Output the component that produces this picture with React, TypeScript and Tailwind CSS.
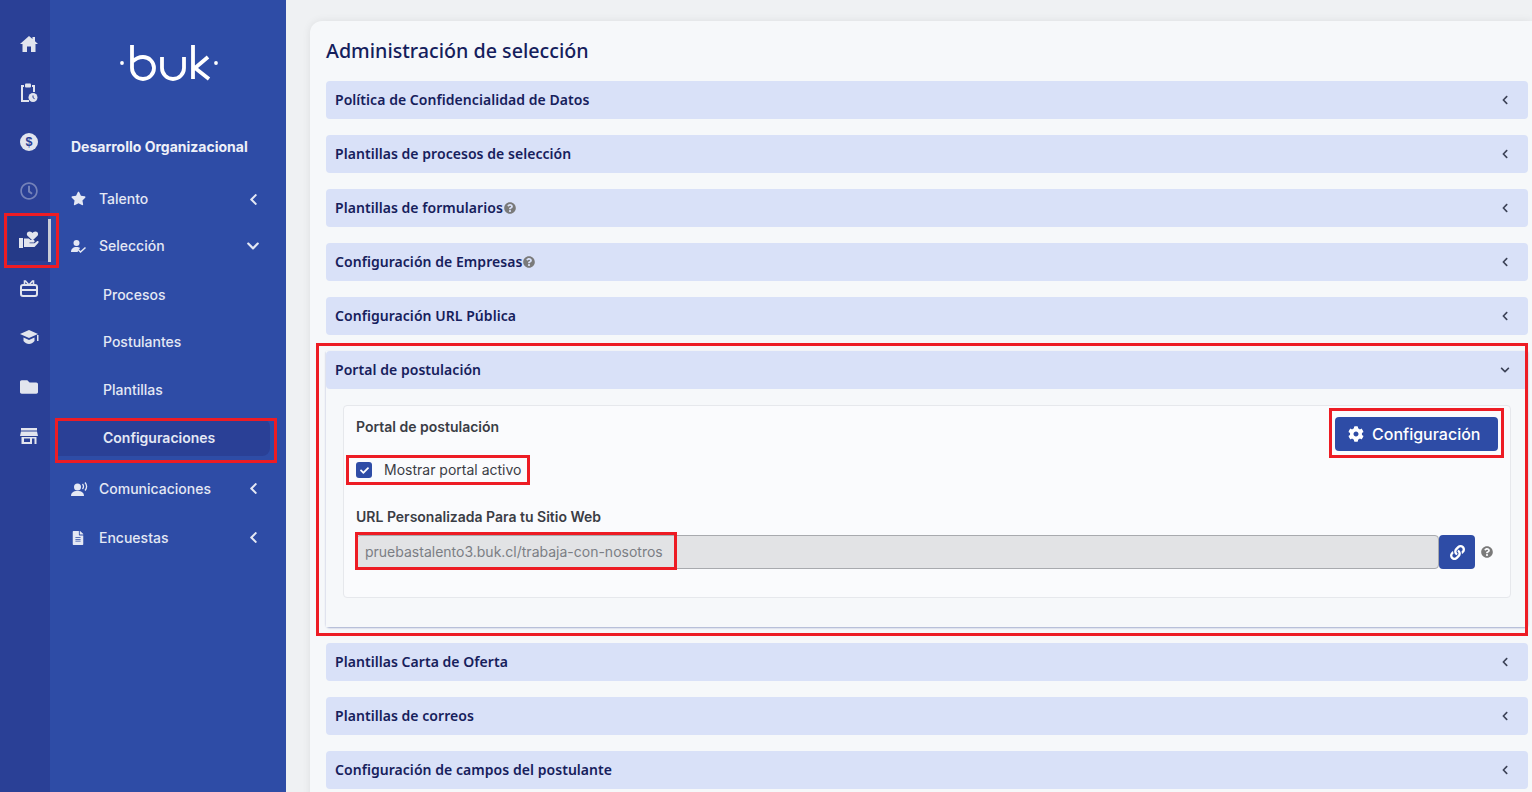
import {
  FaStar,
  FaChevronLeft,
  FaChevronDown,
  FaCog,
  FaLink,
  FaQuestionCircle,
  FaFileAlt,
  FaFolder,
  FaRegClock,
  FaCheck,
} from 'react-icons/fa'

function HomeIcon() {
  return (
    <svg width="18" height="16" viewBox="0 0 18 16" fill="currentColor">
      <path d="M9 0l3.500 3V1H15v4.200L18 8h-2.500v8H11v-5.500H7V16H2.500V8H0z" />
    </svg>
  )
}

function ClipboardClockIcon() {
  return (
    <svg width="18" height="20" viewBox="0 0 18 20" fill="none">
      <path d="M4 3H2v15h7" stroke="currentColor" strokeWidth="2" />
      <path d="M12 3h2v6" stroke="currentColor" strokeWidth="2" />
      <rect x="5" y="0.5" width="6" height="4" rx="1" fill="currentColor" />
      <circle cx="13" cy="14.5" r="4.5" fill="currentColor" />
      <path d="M13 12.500v2.200l1.600 1" stroke="#2a4096" strokeWidth="1" />
    </svg>
  )
}

function DollarCircleIcon() {
  return (
    <svg width="18" height="18" viewBox="0 0 18 18">
      <circle cx="9" cy="9" r="9" fill="currentColor" />
      <text x="9" y="13.4" textAnchor="middle" fontSize="12.5" fontWeight="700" fill="#2a4096" fontFamily="Liberation Sans, sans-serif">$</text>
    </svg>
  )
}

function HandHeartIcon() {
  return (
    <svg width="20" height="17" viewBox="0 0 20 17" fill="currentColor">
      <path d="M13.500 9.500L8.500 4.800C7.300 3.500 7.800 0.500 10.500 0.500c1.500 0 2.500 0.800 3 1.500 0.500-0.700 1.500-1.500 3-1.500 2.700 0 3.200 3 2 4.300z" />
      <rect x="0" y="7" width="4" height="10" />
      <path d="M5 7.500h4c1 0 1.500 0.500 2.500 1.500h3c1.500 0 1.500 2.500 0 2.500H10.500v0.800h5l2.500-2c1.200-0.800 2.200 0.700 1.200 1.700L15.500 16H5z" />
    </svg>
  )
}

function GiftCardIcon() {
  return (
    <svg width="18" height="17" viewBox="0 0 18 17" fill="none">
      <rect x="1" y="5" width="16" height="11" rx="2" stroke="currentColor" strokeWidth="2" />
      <path d="M1 10h16" stroke="currentColor" strokeWidth="2" />
      <path d="M9 5 5.500 1H4.500v4M9 5l3.500-4h1v4" stroke="currentColor" strokeWidth="1.600" />
    </svg>
  )
}

function GradCapIcon() {
  return (
    <svg width="19" height="15" viewBox="0 0 19 15" fill="currentColor">
      <path d="M9 0l9 4-9 4-9-4z" />
      <path d="M3.500 7.500L9 10l5.500-2.500V11c-1.500 2-3.500 3-5.500 3s-4-1-5.500-3z" />
      <rect x="17" y="5" width="1.500" height="6" />
    </svg>
  )
}

function StoreIcon() {
  return (
    <svg width="18" height="16" viewBox="0 0 18 16" fill="currentColor">
      <rect x="1" y="0" width="16" height="2.5" />
      <path d="M1 3.500h16L18 8H0z" />
      <path d="M1.500 9h15v7h-15zM4 10.500V14h6v-3.500zM12 10.500V16h2.500v-5.500z" fillRule="evenodd" />
    </svg>
  )
}

function UserCheckIcon() {
  return (
    <svg width="15" height="13" viewBox="0 0 15 13" fill="none">
      <circle cx="5.500" cy="3" r="3" fill="currentColor" />
      <path d="M0 12c0-3 2-5 5.500-5 1.500 0 2.500 0.300 3.500 1L6.500 12z" fill="currentColor" />
      <path d="M7.500 10l2 2 5-4.500" stroke="currentColor" strokeWidth="1.500" />
    </svg>
  )
}

function SpeakerUserIcon() {
  return (
    <svg width="17" height="14" viewBox="0 0 17 14" fill="none">
      <circle cx="6.500" cy="5" r="3.500" fill="currentColor" />
      <path d="M0 14c0-3 2-5 6.500-5s6.500 2 6.500 5z" fill="currentColor" />
      <path d="M11.500 2c1.200 1.500 1.200 3.500 0 5M14 0.500c2 2.500 2 5.500 0 8" stroke="currentColor" strokeWidth="1.300" />
    </svg>
  )
}

function BukLogo() {
  return (
    <svg width="107" height="45" viewBox="115 40 107 45" fill="none" stroke="white" strokeWidth="3.800">
      <circle cx="122" cy="63" r="1.900" fill="white" stroke="none" />
      <path d="M132 45v23a11 11 0 1 0 11-11c-5 0-8 2-11 5" />
      <path d="M162 57v11a11 11 0 0 0 22 0V57" />
      <path d="M193 45v34M208 57l-13 11 14 11" />
      <circle cx="216" cy="63" r="1.900" fill="white" stroke="none" />
    </svg>
  )
}

const railIcons = [
  <HomeIcon />,
  <ClipboardClockIcon />,
  <DollarCircleIcon />,
  <FaRegClock size={18} className="opacity-40" />,
  <HandHeartIcon />,
  <GiftCardIcon />,
  <GradCapIcon />,
  <FaFolder size={18} />,
  <StoreIcon />,
]

function RedBox({ className }: { className: string }) {
  return <div className={`absolute border-[3px] border-[#ed1c24] pointer-events-none ${className}`} />
}

function SideItem({ icon, label, open, className }: { icon: React.ReactNode; label: string; open?: boolean; className?: string }) {
  return (
    <div className={`flex items-center pl-[21px] pr-[26px] text-[#e4e8f4] ${className ?? 'h-12'}`}>
      <span className="w-[28px] flex items-center">{icon}</span>
      <span className="flex-1 text-sm font-medium">{label}</span>
      <span className="w-[14px] flex justify-center">
        {open ? <FaChevronDown size={14} /> : <FaChevronLeft size={13} />}
      </span>
    </div>
  )
}

function SubItem({ label, active }: { label: string; active?: boolean }) {
  return (
    <div className={`h-[47.67px] flex items-center ${active ? 'font-semibold text-[#e4e8f4]' : 'font-medium text-[#e4e8f4]'}`}>
      <div className={`h-[37px] w-[212px] ml-[8px] pl-[45px] flex items-center text-sm rounded-r-lg ${active ? 'bg-[#2a4096]' : ''}`}>
        {label}
      </div>
    </div>
  )
}

function HelpIcon({ className }: { className?: string }) {
  return <FaQuestionCircle size={12} className={`text-[#7a7a7a] ${className ?? ''}`} />
}

function AccordionRow({ title, help, open }: { title: string; help?: boolean; open?: boolean }) {
  return (
    <div className="h-[38px] bg-[#d9e1f8] rounded flex items-center pl-[9px] pr-[18px]">
      <span className="text-sm font-semibold tracking-[0.05px] text-[#16205c]">{title}</span>
      {help && <HelpIcon className="ml-[1px]" />}
      <span className="ml-auto text-[#3c4257]">
        {open ? <FaChevronDown size={10} /> : <FaChevronLeft size={10} />}
      </span>
    </div>
  )
}

export default function App() {
  return (
    <div className="relative h-[792px] w-[1532px] overflow-hidden flex bg-[#eff1f3] font-['Inter',sans-serif]">
      {/* Rail */}
      <div className="w-[50px] shrink-0 bg-[#2a4096] pt-[19px] flex flex-col text-[#e2e5ee]">
        {railIcons.map((icon, i) => (
          <div key={i} className="relative h-[49px] flex items-center justify-center pl-[8px]">
            {i === 4 && (
              <>
                <div className="absolute left-[8px] top-[1px] w-[40px] h-[45px] bg-[#253a88]" />
                <div className="absolute left-[48px] top-[4px] w-[3px] h-[43px] bg-[#c9ccd6]" />
              </>
            )}
            <span className="relative">{icon}</span>
          </div>
        ))}
      </div>

      {/* Sidebar */}
      <div className="w-[236px] shrink-0 bg-[#2e4ca6] flex flex-col">
        <div className="pt-[40px] pl-[65px] h-[131px]">
          <BukLogo />
        </div>
        <div className="pl-[21px] pt-[6px] text-sm font-bold text-[#eef0f8] h-[44px]">Desarrollo Organizacional</div>
        <SideItem icon={<FaStar size={15} className="-mt-px" />} label="Talento" />
        <SideItem icon={<UserCheckIcon />} label="Selección" open className="h-[46px]" />
        <div className="pt-[2px] pb-[3.3px]">
          <SubItem label="Procesos" />
          <SubItem label="Postulantes" />
          <SubItem label="Plantillas" />
          <SubItem label="Configuraciones" active />
        </div>
        <SideItem icon={<SpeakerUserIcon />} label="Comunicaciones" />
        <SideItem icon={<FaFileAlt size={14} />} label="Encuestas" className="h-12 mt-px" />
      </div>

      {/* Main */}
      <div className="flex-1 pl-[24px] pt-[21px] min-w-0">
        <div className="h-[900px] bg-[#f6f8fa] rounded-l-xl pl-[16px] pr-[4px] shadow-[0_0_8px_rgba(0,0,0,0.08)] font-['Noto_Sans',sans-serif]">
          <h1 className="text-[19.7px] font-medium text-[#14205c] h-[60px] pt-[15px] leading-[30px]">Administración de selección</h1>
          <div className="flex flex-col gap-4">
            <AccordionRow title="Política de Confidencialidad de Datos" />
            <AccordionRow title="Plantillas de procesos de selección" />
            <AccordionRow title="Plantillas de formularios" help />
            <AccordionRow title="Configuración de Empresas" help />
            <AccordionRow title="Configuración URL Pública" />

            <div className="rounded-b shadow-[0_1px_2px_rgba(60,80,150,0.45)]">
              <AccordionRow title="Portal de postulación" open />
              <div className="h-[238px] pt-[16px] px-[17px] bg-[#f6f8fa]">
                <div className="h-[193px] bg-[#fafbfd] border border-[#e6e8ec] rounded pl-[12px] pr-[12px] pt-[10px] font-['Inter',sans-serif] text-[#3a3d45]">
                  <div className="flex justify-between items-start">
                    <div className="text-sm font-semibold mt-[1px]">Portal de postulación</div>
                    <button className="w-[163px] h-[34px] mt-[1px] bg-[#2e4ca6] rounded text-white flex items-center pl-[13px] gap-2 text-base font-medium">
                      <FaCog size={16} />
                      Configuración
                    </button>
                  </div>
                  <label className="flex items-center mt-[9px] h-5 text-sm">
                    <span className="w-4 h-4 rounded-[3px] bg-[#2e4ca6] flex items-center justify-center text-white">
                      <FaCheck size={9} />
                    </span>
                    <span className="ml-[12px]">Mostrar portal activo</span>
                  </label>
                  <div className="text-sm font-semibold mt-[28px] mb-[9px] leading-[18px]">URL Personalizada Para tu Sitio Web</div>
                  <div className="flex items-center">
                    <div className="flex-1 h-[34px] bg-[#e2e3e5] border border-[#a8aaae] rounded pl-[8px] flex items-center text-sm text-[#7b7e84]">
                      pruebastalento3.buk.cl/trabaja-con-nosotros
                    </div>
                    <div className="w-[36px] h-[34px] bg-[#2e4ca6] rounded flex items-center justify-center text-white">
                      <FaLink size={15} />
                    </div>
                    <HelpIcon className="ml-[6px] mr-[5px]" />
                  </div>
                </div>
              </div>
            </div>

            <AccordionRow title="Plantillas Carta de Oferta" />
            <AccordionRow title="Plantillas de correos" />
            <AccordionRow title="Configuración de campos del postulante" />
          </div>
        </div>
      </div>

      {/* Annotation boxes drawn over the screenshot */}
      <RedBox className="left-[4px] top-[213px] w-[55px] h-[55px]" />
      <RedBox className="left-[55px] top-[418px] w-[222px] h-[45px]" />
      <RedBox className="left-[316px] top-[343px] w-[1212px] h-[293px]" />
      <RedBox className="left-[346px] top-[455px] w-[184px] h-[30px]" />
      <RedBox className="left-[355px] top-[532px] w-[322px] h-[38px]" />
      <RedBox className="left-[1329px] top-[408px] w-[175px] h-[50px]" />
    </div>
  )
}
